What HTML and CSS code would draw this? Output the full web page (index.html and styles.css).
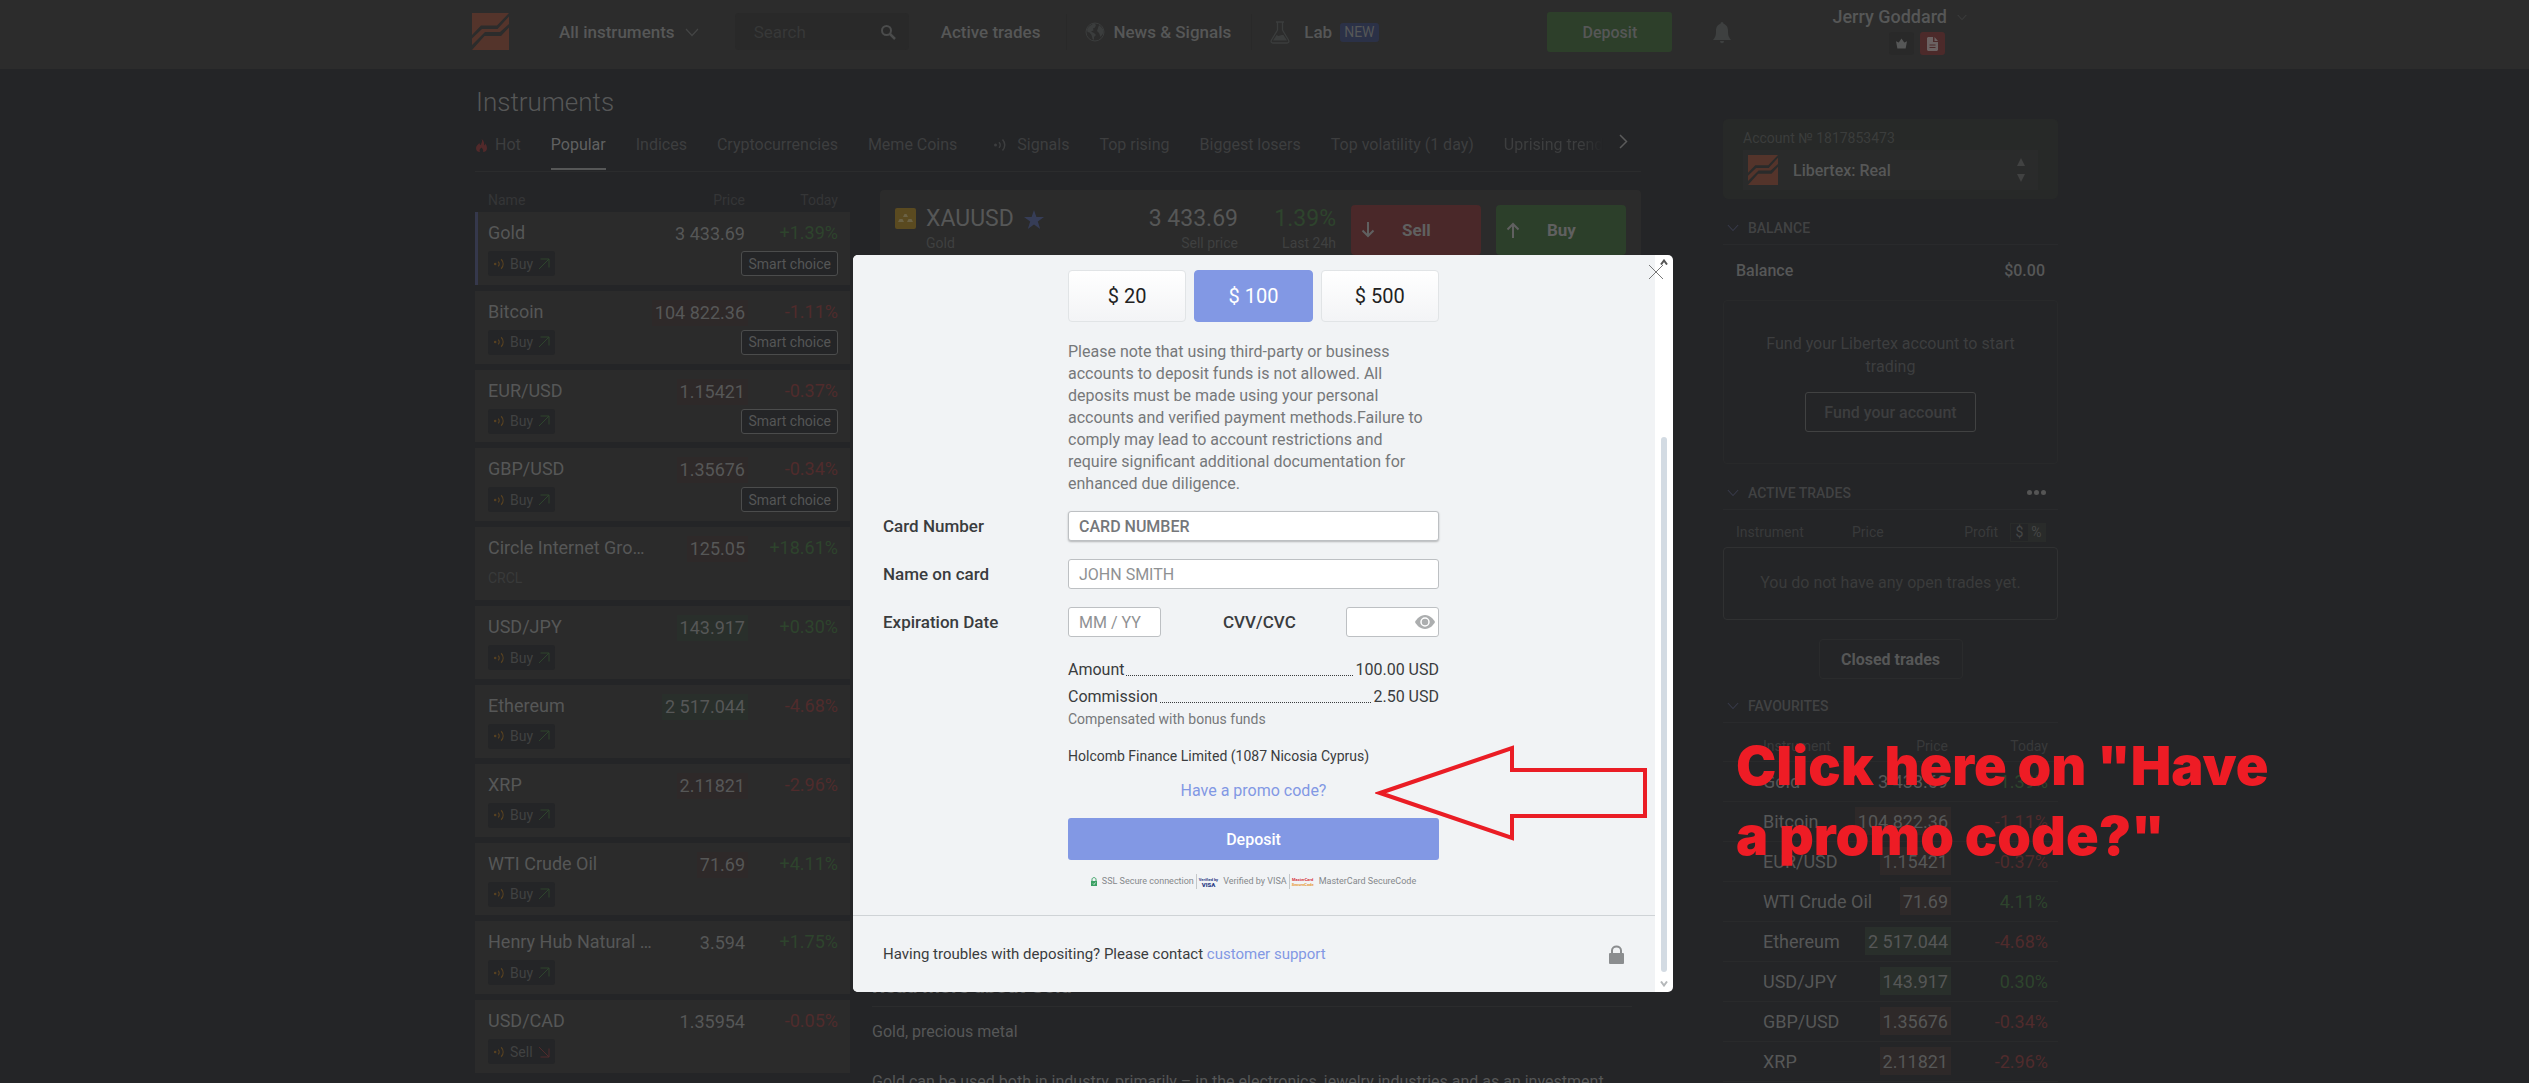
FILE: index.html
```html
<!DOCTYPE html>
<html lang="en">
<head>
    <meta charset="UTF-8">
    <meta name="viewport" content="width=device-width, initial-scale=1.0">
    <title>Libertex</title>
    <link rel="stylesheet" href="styles.css">
</head>
<body>
    <!-- Shared icons -->
    <svg class="sprite" aria-hidden="true">
        <symbol id="logo" viewBox="0 0 37 37">
            <path d="M0 0h37L25 12.500H9L0 22z"/>
            <path d="M37 3.500V11L28 19H13L0 32v-6.500L10 16h15.500z"/>
            <path d="M37 14.500V37H0L12.500 23H29z"/>
        </symbol>
        <symbol id="chevron" viewBox="0 0 14 9">
            <path d="M1 1l6 6.500L13 1" fill="none" stroke="currentColor" stroke-width="1.200"/>
        </symbol>
        <symbol id="signal" viewBox="0 0 14 14">
            <circle cx="2.500" cy="7" r="1.500" fill="currentColor"/>
            <path d="M6 4.200c1.600 1.600 1.600 4 0 5.600M9.500 1.500c3 3.200 3 7.800 0 11" fill="none" stroke="currentColor" stroke-width="1.500"/>
        </symbol>
        <symbol id="arrow-up-right" viewBox="0 0 12 12">
            <path d="M1 11L11 1M2.500 1H11v8.500" fill="none" stroke="currentColor"/>
        </symbol>
        <symbol id="arrow-down-right" viewBox="0 0 12 12">
            <path d="M1 1l10 10M2.500 11H11V2.500" fill="none" stroke="currentColor"/>
        </symbol>
    </svg>

    <header class="topbar">
        <div class="topbar-inner">
            <a href="#" class="logo" aria-label="Libertex"><svg><use href="#logo"/></svg></a>
            <button class="nav-menu">All instruments <svg><use href="#chevron"/></svg></button>
            <div class="search">
                <input type="text" placeholder="Search" aria-label="Search">
                <svg viewBox="0 0 16 16"><circle cx="6.500" cy="6.500" r="4.500" fill="none" stroke="currentColor" stroke-width="2"/><path d="M10 10l5 5" stroke="currentColor" stroke-width="2.500"/></svg>
            </div>
            <nav class="nav">
                <a href="#" class="nav-link">Active trades</a>
                <a href="#" class="nav-link nav-news">
                    <svg viewBox="0 0 20 20"><circle cx="10" cy="10" r="9" fill="none" stroke="currentColor"/><path d="M4 4.500l5-3.500 2 2-1 2.500-2 1 .500 2-2.500 1 3 1.500 2 2-2 2v3l-1.500-1-1-4-2-2.500-2-.500L2 7zM14 3l4 4 .500 4-3 4-1.500-4-2-2 1-3z" fill="currentColor"/></svg>
                    News &amp; Signals
                </a>
                <a href="#" class="nav-link nav-lab">
                    <svg viewBox="0 0 20 23"><path d="M6 1h8M7.500 1v8L1.500 19c-1 2 0 3 1.500 3h14c1.500 0 2.500-1 1.500-3l-6-10V1" fill="none" stroke="currentColor" stroke-width="1.300"/><path d="M6.500 14l2 1 3-1h2l3.500 5.500H3z" fill="currentColor"/></svg>
                    Lab <span class="badge-new">NEW</span>
                </a>
            </nav>
            <div class="account-menu">
                <button class="btn-deposit-top">Deposit</button>
                <button class="bell" aria-label="Notifications">
                    <svg viewBox="0 0 18 22"><path d="M9 0c1 0 1.500.800 1.500 1.800C14 2.800 15 6 15 9c0 5 1 6.500 3 9H0c2-2.500 3-4 3-9 0-3 1-6.200 4.500-7.200C7.500.800 8 0 9 0zM7 19h4c0 3-4 3-4 0z" fill="currentColor"/></svg>
                </button>
                <div class="user">
                    <button class="user-name">Jerry Goddard <svg><use href="#chevron"/></svg></button>
                    <div class="user-badges">
                        <span class="user-badge crown"><svg viewBox="0 0 12 11"><path d="M0 3l3 1.500L6 0l3 4.500L12 3l-1.500 8h-9z" fill="currentColor"/></svg></span>
                        <span class="user-badge doc"><svg viewBox="0 0 11 14"><path d="M1 0h5v5h5v8l-1 1H1l-1-1V1zM7.500 0L11 4H7.500z" fill="currentColor"/><path d="M2.500 8h6M2.500 10.500h6" stroke="#4c2a2a"/></svg></span>
                    </div>
                </div>
            </div>
        </div>
    </header>

    <main class="page">
        <section class="workspace">
            <h1>Instruments</h1>
            <div class="tabs">
                <button class="tab tab-hot"><svg viewBox="0 0 11 13"><path d="M5.500 0C7 2.500 5 4 5 6 4 6 3.500 5 3.500 4 1 6 0 7.500 0 9.500 0 12 2 13 4 13c-1-2 0-3 1.500-4.500C7 10 7.500 11.500 7 13c2.500 0 4-1.500 4-4 0-2-1-3-1.500-4.500-.500 1-.500 1.500-1.500 2C8.500 4 8 1.500 5.500 0z" fill="currentColor"/></svg>Hot</button>
                <button class="tab active">Popular</button>
                <button class="tab">Indices</button>
                <button class="tab">Cryptocurrencies</button>
                <button class="tab">Meme Coins</button>
                <button class="tab tab-signals"><svg><use href="#signal"/></svg>Signals</button>
                <button class="tab">Top rising</button>
                <button class="tab">Biggest losers</button>
                <button class="tab">Top volatility (1 day)</button>
                <button class="tab tab-last">Uprising trend</button>
                <button class="tabs-next" aria-label="Next"><svg viewBox="0 0 9 15"><path d="M1 1l6.500 6.500L1 14" fill="none" stroke="currentColor" stroke-width="1.500"/></svg></button>
            </div>

            <div class="columns">
                <table class="instruments">
                    <thead>
                        <tr><th>Name</th><th>Price</th><th>Today</th></tr>
                    </thead>
                    <tbody>
                        <tr class="selected">
                            <td>Gold<span class="tag"><svg class="sig"><use href="#signal"/></svg>Buy<svg class="up"><use href="#arrow-up-right"/></svg></span></td>
                            <td><span class="price">3 433.69</span></td>
                            <td class="up">+1.39%<span class="smart">Smart choice</span></td>
                        </tr>
                        <tr>
                            <td>Bitcoin<span class="tag"><svg class="sig"><use href="#signal"/></svg>Buy<svg class="up"><use href="#arrow-up-right"/></svg></span></td>
                            <td><span class="price fall">104 822.36</span></td>
                            <td class="down">-1.11%<span class="smart">Smart choice</span></td>
                        </tr>
                        <tr>
                            <td>EUR/USD<span class="tag"><svg class="sig"><use href="#signal"/></svg>Buy<svg class="up"><use href="#arrow-up-right"/></svg></span></td>
                            <td><span class="price fall">1.15421</span></td>
                            <td class="down">-0.37%<span class="smart">Smart choice</span></td>
                        </tr>
                        <tr>
                            <td>GBP/USD<span class="tag"><svg class="sig"><use href="#signal"/></svg>Buy<svg class="up"><use href="#arrow-up-right"/></svg></span></td>
                            <td><span class="price fall">1.35676</span></td>
                            <td class="down">-0.34%<span class="smart">Smart choice</span></td>
                        </tr>
                        <tr>
                            <td>Circle Internet Gro…<span class="ticker">CRCL</span></td>
                            <td><span class="price fall">125.05</span></td>
                            <td class="up">+18.61%</td>
                        </tr>
                        <tr>
                            <td>USD/JPY<span class="tag"><svg class="sig"><use href="#signal"/></svg>Buy<svg class="up"><use href="#arrow-up-right"/></svg></span></td>
                            <td><span class="price rise">143.917</span></td>
                            <td class="up">+0.30%</td>
                        </tr>
                        <tr>
                            <td>Ethereum<span class="tag"><svg class="sig"><use href="#signal"/></svg>Buy<svg class="up"><use href="#arrow-up-right"/></svg></span></td>
                            <td><span class="price rise">2 517.044</span></td>
                            <td class="down">-4.68%</td>
                        </tr>
                        <tr>
                            <td>XRP<span class="tag"><svg class="sig"><use href="#signal"/></svg>Buy<svg class="up"><use href="#arrow-up-right"/></svg></span></td>
                            <td><span class="price fall">2.11821</span></td>
                            <td class="down">-2.96%</td>
                        </tr>
                        <tr>
                            <td>WTI Crude Oil<span class="tag"><svg class="sig"><use href="#signal"/></svg>Buy<svg class="up"><use href="#arrow-up-right"/></svg></span></td>
                            <td><span class="price fall">71.69</span></td>
                            <td class="up">+4.11%</td>
                        </tr>
                        <tr>
                            <td>Henry Hub Natural …<span class="tag"><svg class="sig"><use href="#signal"/></svg>Buy<svg class="up"><use href="#arrow-up-right"/></svg></span></td>
                            <td><span class="price">3.594</span></td>
                            <td class="up">+1.75%</td>
                        </tr>
                        <tr>
                            <td>USD/CAD<span class="tag"><svg class="sig"><use href="#signal"/></svg>Sell<svg class="down"><use href="#arrow-down-right"/></svg></span></td>
                            <td><span class="price">1.35954</span></td>
                            <td class="down">-0.05%</td>
                        </tr>
                    </tbody>
                </table>

                <div class="details">
                    <div class="chart-panel">
                        <svg class="gold-icon" viewBox="0 0 21 21"><rect width="21" height="21" rx="2" fill="#5a4a20"/><path d="M8 9l1.500-3h2L13 9zM3 14l1.500-3h3L9 14zM12 14l1.500-3h3l1.500 3z" fill="#6b6245"/></svg>
                        <div class="symbol">
                            <strong>XAUUSD</strong>
                            <small>Gold</small>
                        </div>
                        <svg class="star" viewBox="0 0 20 19"><path d="M10 0l2.400 7H20l-6.200 4.400L16.200 19 10 14.500 3.800 19l2.400-7.600L0 7h7.600z" fill="currentColor"/></svg>
                        <div class="quote">
                            <strong>3 433.69</strong>
                            <small>Sell price</small>
                        </div>
                        <div class="quote change">
                            <strong class="up">1.39%</strong>
                            <small>Last 24h</small>
                        </div>
                        <button class="trade sell"><svg viewBox="0 0 14 16"><path d="M7 0v14M1.500 8.500L7 14l5.500-5.500" fill="none" stroke="currentColor" stroke-width="2"/></svg>Sell</button>
                        <button class="trade buy"><svg viewBox="0 0 14 16"><path d="M7 16V2M1.500 7.500L7 2l5.500 5.500" fill="none" stroke="currentColor" stroke-width="2"/></svg>Buy</button>
                    </div>
                    <article class="about">
                        <h2>Read more about Gold</h2>
                        <p>Gold, precious metal</p>
                        <p>Gold can be used both in industry, primarily – in the electronics, jewelry industries and as an investment</p>
                    </article>
                </div>
            </div>
        </section>

        <aside class="sidebar">
            <div class="account-card">
                <span class="account-no">Account № 1817853473</span>
                <button class="account-select">
                    <svg class="account-logo"><use href="#logo"/></svg>
                    Libertex: Real
                    <svg class="account-arrows" viewBox="0 0 8 24"><path d="M0 8l4-8 4 8zM0 16h8l-4 8z" fill="currentColor"/></svg>
                </button>
            </div>

            <h3 class="side-title"><svg><use href="#chevron"/></svg>BALANCE</h3>
            <div class="balance"><span>Balance</span><span>$0.00</span></div>
            <div class="fund-box">
                <p>Fund your Libertex account to start trading</p>
                <button>Fund your account</button>
            </div>

            <h3 class="side-title"><svg><use href="#chevron"/></svg>ACTIVE TRADES<span class="dots"><i></i><i></i><i></i></span></h3>
            <div class="trades-head">
                <span>Instrument</span>
                <span>Price</span>
                <span class="profit">Profit</span>
                <span class="unit"><b>$</b><b class="off">%</b></span>
            </div>
            <div class="no-trades">You do not have any open trades yet.</div>
            <button class="closed-trades">Closed trades</button>

            <h3 class="side-title"><svg><use href="#chevron"/></svg>FAVOURITES</h3>
            <table class="favourites">
                <thead><tr><th>Instrument</th><th>Price</th><th>Today</th></tr></thead>
                <tbody>
                    <tr><td>Gold</td><td><span class="price">3 433.69</span></td><td class="up">1.39%</td></tr>
                    <tr><td>Bitcoin</td><td><span class="price fall">104 822.36</span></td><td class="down">-1.11%</td></tr>
                    <tr><td>EUR/USD</td><td><span class="price fall">1.15421</span></td><td class="down">-0.37%</td></tr>
                    <tr><td>WTI Crude Oil</td><td><span class="price fall">71.69</span></td><td class="up">4.11%</td></tr>
                    <tr><td>Ethereum</td><td><span class="price rise">2 517.044</span></td><td class="down">-4.68%</td></tr>
                    <tr><td>USD/JPY</td><td><span class="price rise">143.917</span></td><td class="up">0.30%</td></tr>
                    <tr><td>GBP/USD</td><td><span class="price fall">1.35676</span></td><td class="down">-0.34%</td></tr>
                    <tr><td>XRP</td><td><span class="price fall">2.11821</span></td><td class="down">-2.96%</td></tr>
                </tbody>
            </table>
        </aside>

        <p class="callout">Click here on "Have<br>a promo code?"</p>
    </main>

    <div class="overlay">
        <div class="modal" role="dialog" aria-label="Deposit">
            <form class="modal-content">
                <div class="form-area">
                    <div class="amounts">
                        <button type="button">$ 20</button>
                        <button type="button" class="active">$ 100</button>
                        <button type="button">$ 500</button>
                    </div>
                    <p class="note">Please note that using third-party or business accounts to deposit funds is not allowed. All deposits must be made using your personal accounts and verified payment methods.Failure to comply may lead to account restrictions and require significant additional documentation for enhanced due diligence.</p>

                    <label for="card-number">Card Number</label>
                    <div class="field"><input type="text" id="card-number" class="focused" placeholder="CARD NUMBER"></div>

                    <label for="card-name">Name on card</label>
                    <div class="field"><input type="text" id="card-name" placeholder="JOHN SMITH"></div>

                    <label for="card-expiry">Expiration Date</label>
                    <div class="field field-split">
                        <input type="text" id="card-expiry" placeholder="MM / YY">
                        <label for="card-cvv">CVV/CVC</label>
                        <div class="cvv">
                            <input type="text" id="card-cvv">
                            <svg viewBox="0 0 20 14"><path d="M10 0c5 0 8.500 4 10 7-1.500 3-5 7-10 7S1.500 10 0 7c1.500-3 5-7 10-7z" fill="#acaeaf"/><circle cx="10" cy="7" r="4" fill="none" stroke="#fff" stroke-width="1.500"/></svg>
                        </div>
                    </div>

                    <div class="summary">
                        <div class="sum-row"><span>Amount</span><i></i><span>100.00 USD</span></div>
                        <div class="sum-row"><span>Commission</span><i></i><span>2.50 USD</span></div>
                        <small>Compensated with bonus funds</small>
                        <p class="company">Holcomb Finance Limited (1087 Nicosia Cyprus)</p>
                        <a href="#" class="promo">Have a promo code?</a>
                        <button type="button" class="btn-deposit">Deposit</button>
                        <div class="secure">
                            <span><svg class="ssl" viewBox="0 0 6 9"><path d="M0 4h6v5H0z" fill="#3aa063"/><path d="M1 4V2.500C1 0 5 0 5 2.500V4" fill="none" stroke="#3aa063"/><path d="M2 6.500l1 1 1.500-2" fill="none" stroke="#fff" stroke-width=".700"/></svg>SSL Secure connection</span>
                            <span><em class="visa">Verified by<b>VISA</b></em>Verified by VISA</span>
                            <span><em class="mc">MasterCard<b>SecureCode</b></em>MasterCard SecureCode</span>
                        </div>
                    </div>
                </div>
                <footer class="modal-footer">
                    <span>Having troubles with depositing? Please contact <a href="#">customer support</a></span>
                    <svg viewBox="0 0 15 19"><rect y="8" width="15" height="11" rx="1" fill="#8b8d8f"/><path d="M3 9V5.500C3 0 12 0 12 5.500V9" fill="none" stroke="#8b8d8f" stroke-width="2"/></svg>
                </footer>
            </form>
            <div class="scrollbar">
                <svg viewBox="0 0 8 6"><path d="M1 5.500L4 1.500l3 4" fill="none" stroke="#555" stroke-width="2"/></svg>
                <span></span>
                <svg viewBox="0 0 8 6"><path d="M1 .500l3 4 3-4" fill="none" stroke="#b5b8ba" stroke-width="2"/></svg>
            </div>
            <button class="close" aria-label="Close"><svg viewBox="0 0 14 14"><path d="M0 0l14 14M14 0L0 14" stroke="#777" stroke-width="1"/></svg></button>
            <svg class="pointer" viewBox="0 0 272 98"><path d="M5 49L137 4v22h133v46H137v22z" fill="none" stroke="#ea1d25" stroke-width="4"/></svg>
        </div>
    </div>
</body>
</html>
```
FILE: styles.css
```css
:root {
    --bg: #242527;
    --panel: #2b2b2b;
    --text: #565757;
    --muted: #3d3e3f;
    --line: #2b2c2d;
    --up: #2e442d;
    --down: #502b2c;
    --accent: #8298e4;
    --red: #ee1c25;
}

* {
    box-sizing: border-box;
}

body {
    margin: 0;
    height: 100vh;
    overflow: hidden;
    display: flex;
    flex-direction: column;
    background: var(--bg);
    color: var(--text);
    font-family: Roboto, "Liberation Sans", sans-serif;
    font-size: 16px;
}

button {
    font: inherit;
    color: inherit;
    background: none;
    border: none;
    padding: 0;
}

input {
    font: inherit;
}

a {
    color: inherit;
    text-decoration: none;
}

h1, h2, h3, p {
    margin: 0;
    font-weight: normal;
}

.sprite {
    position: absolute;
    width: 0;
    height: 0;
}

.up {
    color: var(--up);
}

.down {
    color: var(--down);
}

/* Top bar */
.topbar {
    height: 69px;
    flex: none;
    background: #2c2c2c;
}

.topbar-inner {
    max-width: 1587px;
    margin: 0 auto;
    padding: 0 91px 0 1px;
    display: flex;
    font-size: 17px;
    font-weight: 500;
}

.logo {
    margin: 13px 50px 0 0;
}

.logo svg {
    display: block;
    width: 37px;
    height: 37px;
    fill: #54342b;
}

.nav-menu {
    display: flex;
    align-items: center;
    gap: 10px;
    height: 64px;
    margin-right: 36px;
    white-space: nowrap;
}

.nav-menu svg {
    width: 14px;
    height: 9px;
    color: #444545;
}

.search {
    display: flex;
    align-items: center;
    width: 174px;
    height: 37px;
    margin: 13px 32px 0 0;
    padding: 0 13px 0 19px;
    background: #292929;
    border-radius: 4px;
}

.search input {
    flex: 1;
    min-width: 0;
    padding: 0;
    border: none;
    background: none;
    color: var(--text);
    font-weight: 400;
}

.search input::placeholder {
    color: #373838;
}

.search svg {
    width: 16px;
    height: 16px;
    color: #4b4c4c;
}

.nav {
    display: flex;
    align-items: center;
    height: 64px;
    white-space: nowrap;
}

.nav-link {
    display: flex;
    align-items: center;
    height: 36px;
    padding-right: 26px;
}

.nav-news,
.nav-lab {
    padding-left: 18px;
    padding-right: 20px;
    border-left: 1px solid #292929;
    gap: 8px;
}

.nav-news svg {
    width: 20px;
    height: 20px;
    color: #3b3d3d;
}

.nav-lab svg {
    width: 20px;
    height: 23px;
    margin-right: 6px;
    color: #3b3d3d;
}

.badge-new {
    padding: 0 4px;
    line-height: 19px;
    font-size: 14px;
    font-weight: 400;
    background: #2b3147;
    border-radius: 3px;
}

.account-menu {
    display: flex;
    flex: 1;
    justify-content: flex-end;
}

.btn-deposit-top {
    width: 125px;
    height: 40px;
    margin-top: 12px;
    background: #2d3f2a;
    border-radius: 3px;
    font-size: 16px;
}

.bell {
    margin: 22px 0 0 41px;
    height: 22px;
    color: #3e4040;
}

.bell svg {
    display: block;
    width: 18px;
    height: 22px;
}

.user {
    margin: 5px 0 0 101px;
}

.user-name {
    display: flex;
    align-items: center;
    gap: 10px;
    line-height: 24px;
    font-size: 18px;
    font-weight: 500;
    white-space: nowrap;
}

.user-name svg {
    width: 10px;
    height: 7px;
    color: #424343;
}

.user-badges {
    display: flex;
    justify-content: flex-end;
    gap: 6px;
    padding: 3px 22px 0 0;
}

.user-badge {
    display: flex;
    align-items: center;
    justify-content: center;
    width: 25px;
    height: 23px;
    border-radius: 3px;
    background: #292929;
}

.user-badge svg {
    width: 11px;
    height: 14px;
}

.user-badge.crown svg {
    height: 11px;
}

.user-badge.doc {
    background: #4c2a2a;
    color: #6b6262;
}

/* Page layout */
.page {
    position: relative;
    flex: 1;
    min-height: 0;
    width: 100%;
    max-width: 1587px;
    margin: 0 auto;
    padding-left: 4px;
    display: grid;
    grid-template-columns: 1fr 335px;
    grid-template-rows: minmax(0, 1fr);
    gap: 82px;
}

.workspace {
    display: flex;
    flex-direction: column;
    min-height: 0;
    min-width: 0;
}

.workspace h1 {
    padding: 16px 0 0 1px;
    font-size: 26px;
    line-height: 34px;
    font-weight: 300;
}

.tabs {
    display: flex;
    height: 53px;
    border-bottom: 1px solid var(--line);
    white-space: nowrap;
}

.tab {
    display: flex;
    align-items: center;
    height: 51px;
    margin-right: 30px;
    color: var(--muted);
}

.tab.active {
    color: #606161;
    border-bottom: 2px solid #565757;
    border-top: 2px solid transparent;
}

.tab-hot svg {
    width: 11px;
    height: 13px;
    margin: 2px 8px 0 1px;
    color: #51292a;
}

.tab-signals svg {
    width: 14px;
    height: 14px;
    margin: 0 10px 0 6px;
}

.tab-last {
    flex: 1;
    min-width: 0;
    margin-right: 10px;
    overflow: hidden;
    -webkit-mask-image: linear-gradient(to left, transparent 6px, #000 28px);
    mask-image: linear-gradient(to left, transparent 6px, #000 28px);
}

.tabs-next {
    width: 22px;
    height: 49px;
    text-align: left;
    color: #5a5b5b;
}

.tabs-next svg {
    width: 9px;
    height: 15px;
}

.columns {
    flex: 1;
    min-height: 0;
    display: grid;
    grid-template-columns: 375px 1fr;
    gap: 22px;
}

/* Instrument list */
.instruments {
    display: flex;
    flex-direction: column;
    padding: 16px 0 10px;
}

.instruments tbody {
    flex: 1;
    display: flex;
    flex-direction: column;
    gap: 6px;
}

.instruments tr {
    display: grid;
    grid-template-columns: 1fr auto 93px;
    padding: 0 12px 0 13px;
}

.instruments tbody tr {
    flex: 1;
    padding-top: 9px;
    background: var(--panel);
    font-size: 18px;
    line-height: 24px;
}

.instruments tbody tr.selected {
    padding-left: 10px;
    border-left: 3px solid #35384c;
}

.instruments th {
    padding: 0;
    line-height: 24px;
    font-size: 14px;
    font-weight: 400;
    color: #353637;
    text-align: right;
}

.instruments th:first-child {
    text-align: left;
}

.instruments td {
    display: flex;
    flex-direction: column;
    align-items: flex-end;
    padding: 0;
    white-space: nowrap;
}

.instruments td:first-child {
    align-items: flex-start;
}

.price {
    margin-right: -3px;
    padding: 1px 3px;
}

.price.fall {
    background: #2e2929;
}

.price.rise {
    background: #292f2b;
}

.tag,
.smart {
    display: flex;
    align-items: center;
    height: 25px;
    margin-top: 6px;
    border-radius: 3px;
    background: var(--bg);
    font-size: 14px;
}

.tag {
    gap: 5px;
    padding: 0 5px;
    color: #414242;
}

.tag svg {
    width: 12px;
    height: 12px;
}

.tag .sig {
    color: #574121;
}

.smart {
    padding: 0 6px;
    border: 1px solid #4b4c4c;
    color: #555656;
}

.ticker {
    margin-top: 6px;
    font-size: 14px;
    color: #393a3a;
}

/* Chart and description */
.details {
    display: flex;
    flex-direction: column;
    min-height: 0;
    padding-top: 18px;
}

.chart-panel {
    flex: 1;
    display: flex;
    align-items: flex-start;
    margin-left: 8px;
    padding: 15px 15px 0;
    background: var(--panel);
    border-radius: 4px;
}

.chart-panel strong {
    display: block;
    font-size: 23px;
    line-height: 28px;
    font-weight: 400;
}

.chart-panel small {
    display: block;
    font-size: 14px;
    line-height: 20px;
    color: #3f4040;
}

.gold-icon {
    width: 21px;
    height: 21px;
    margin: 3px 10px 0 0;
}

.star {
    width: 20px;
    height: 19px;
    margin: 5px 0 0 10px;
    color: #363d57;
}

.quote {
    flex: 1;
    text-align: right;
}

.quote.change {
    flex: none;
    width: 98px;
}

.trade {
    display: flex;
    align-items: center;
    width: 130px;
    height: 50px;
    margin-left: 15px;
    padding-left: 10px;
    gap: 27px;
    border-radius: 4px;
    font-size: 17px;
    font-weight: 700;
    color: #606060;
}

.trade svg {
    width: 14px;
    height: 16px;
}

.trade.sell {
    background: #4a2829;
}

.trade.buy {
    background: #2c3f2a;
}

.about {
    height: 113px;
    overflow: hidden;
    padding-right: 9px;
    line-height: 22px;
}

.about h2 {
    padding: 4px 0 8px;
    border-bottom: 1px solid var(--line);
    font-size: 20px;
    line-height: 24px;
    font-weight: 700;
}

.about p {
    padding-top: 14px;
    white-space: nowrap;
}

.about p + p {
    padding-top: 28px;
}

/* Sidebar */
.account-card {
    margin-top: 50px;
    height: 80px;
    padding: 8px 20px 0;
    border-radius: 5px;
    background: #272928;
}

.account-no {
    display: block;
    font-size: 14px;
    line-height: 23px;
    color: #3b3d3c;
}

.account-select {
    display: flex;
    align-items: center;
    width: 100%;
    height: 40px;
    padding: 0 13px 0 5px;
    background: #2a2b2b;
    font-weight: 500;
}

.account-logo {
    width: 30px;
    height: 30px;
    margin-right: 15px;
    fill: #54342b;
}

.account-arrows {
    width: 8px;
    height: 24px;
    margin-left: auto;
    color: #414242;
}

.side-title {
    display: flex;
    align-items: center;
    height: 34px;
    margin-top: 12px;
    padding: 0 12px 0 4px;
    border-bottom: 1px solid #292a2c;
    font-size: 14px;
    font-weight: 500;
    color: #414243;
}

.side-title svg {
    width: 12px;
    height: 8px;
    margin-right: 9px;
    color: #383a4a;
}

.dots {
    display: flex;
    gap: 2px;
    margin-left: auto;
}

.dots i {
    width: 5px;
    height: 5px;
    border-radius: 50%;
    background: #555;
}

.balance {
    display: flex;
    justify-content: space-between;
    padding: 0 13px;
    line-height: 52px;
    font-weight: 500;
}

.fund-box {
    height: 164px;
    margin-top: 3px;
    padding: 31px 32px 0;
    border: 1px solid #28292a;
    border-radius: 4px;
    text-align: center;
    line-height: 23px;
    color: var(--muted);
}

.fund-box button {
    height: 40px;
    margin-top: 14px;
    padding: 0 18px;
    border: 1px solid #414242;
    border-radius: 3px;
    font-weight: 500;
}

.trades-head {
    display: flex;
    align-items: center;
    height: 36px;
    padding: 8px 12px 0 13px;
    font-size: 14px;
    color: #393a3b;
}

.trades-head span:first-child {
    width: 116px;
}

.trades-head .profit {
    margin: 0 12px 0 auto;
}

.unit {
    display: flex;
    background: #292b2a;
    border: 1px solid #292b2a;
}

.unit b {
    width: 17px;
    line-height: 17px;
    text-align: center;
    background: var(--bg);
    color: #454646;
    font-weight: 400;
}

.unit .off {
    background: none;
}

.no-trades {
    height: 73px;
    margin-top: 1px;
    border: 1px solid #303132;
    border-radius: 4px;
    text-align: center;
    line-height: 70px;
    color: #3a3b3b;
}

.closed-trades {
    display: block;
    width: 144px;
    height: 40px;
    margin: 19px auto 0;
    border: 1px solid #2a2b2c;
    border-radius: 4px;
    font-weight: 700;
}

.closed-trades + .side-title {
    margin-top: 10px;
}

.favourites {
    width: 100%;
    table-layout: fixed;
    border-collapse: collapse;
    font-size: 18px;
    white-space: nowrap;
}

.favourites th {
    padding: 8px 0 0;
    height: 38px;
    border-bottom: 1px solid #292a2b;
    font-size: 14px;
    font-weight: 400;
    color: #393a3b;
    text-align: right;
}

.favourites td {
    height: 40px;
    padding: 0;
    border-bottom: 1px solid #292a2b;
    text-align: right;
}

.favourites .price {
    margin-right: 0;
    padding: 4px 3px 3px;
}

.favourites th:nth-child(2) {
    padding-right: 3px;
}

.favourites th:first-child,
.favourites td:first-child {
    width: 123px;
    padding-left: 40px;
    text-align: left;
}

.favourites th:last-child,
.favourites td:last-child {
    width: 107px;
    padding-right: 10px;
}

/* Callout text over the sidebar */
.callout {
    position: absolute;
    left: 1265px;
    top: 662px;
    color: var(--red);
    font-family: Inter, "Liberation Sans", sans-serif;
    font-size: 54px;
    line-height: 70px;
    font-weight: 900;
    white-space: nowrap;
}

/* Deposit window */
.overlay {
    position: fixed;
    inset: 0;
    padding: 255px 3px 0 0;
}

.modal {
    position: relative;
    width: 820px;
    margin: 0 auto;
    display: flex;
    overflow: hidden;
    border-radius: 5px;
    background: #fff;
    color: #3a3c3e;
}

.modal-content {
    flex: 1;
    background: #f1f3f5;
}

.form-area {
    display: grid;
    grid-template-columns: 185px 371px;
    padding: 15px 0 26px 30px;
}

.amounts,
.note,
.summary {
    grid-column: 2;
}

.amounts {
    display: grid;
    grid-template-columns: repeat(3, 1fr);
    gap: 8px;
}

.amounts button {
    height: 52px;
    border: 1px solid #e1e4e6;
    border-radius: 4px;
    background: linear-gradient(#fff, #f3f4f6);
    font-size: 20px;
    color: #222;
}

.amounts button.active {
    border-color: var(--accent);
    background: var(--accent);
    color: #fff;
}

.note {
    margin: 19px 0 16px;
    padding-right: 6px;
    font-size: 16px;
    line-height: 22px;
    color: #76787a;
}

.form-area label {
    font-size: 17px;
    line-height: 31px;
    font-weight: 500;
}

.field {
    height: 30px;
    margin-bottom: 18px;
}

.field input {
    display: block;
    width: 100%;
    height: 30px;
    padding: 0 10px;
    border: 1px solid #bdc0c3;
    border-radius: 3px;
    background: #fff;
    color: #3a3c3e;
}

.field input::placeholder {
    color: #8f9193;
}

.field input.focused {
    font-weight: 500;
    box-shadow: 0 1px 2px rgba(0, 0, 0, 0.25);
}

.field input.focused::placeholder {
    color: #75777a;
}

.field-split {
    display: flex;
}

.field-split > label {
    margin: 0 auto 0 62px;
}

.field-split > input,
.cvv {
    width: 93px;
}

.cvv {
    position: relative;
}

.cvv svg {
    position: absolute;
    right: 4px;
    top: 8px;
    width: 20px;
    height: 14px;
}

.summary {
    padding-top: 1px;
}

.sum-row {
    display: flex;
    font-size: 16px;
    line-height: 27px;
}

.sum-row i {
    flex: 1;
    height: 20px;
    margin: 0 2px;
    border-bottom: 1px dotted #3a3c3e;
}

.summary small {
    display: block;
    font-size: 14px;
    line-height: 18px;
    color: #76787a;
}

.company {
    margin-top: 16px;
    font-size: 14px;
    line-height: 24px;
}

.promo {
    display: block;
    margin-top: 10px;
    line-height: 26px;
    text-align: center;
    color: var(--accent);
}

.btn-deposit {
    display: block;
    width: 100%;
    height: 42px;
    margin-top: 14px;
    border-radius: 3px;
    background: var(--accent);
    color: #fff;
    font-weight: 500;
}

.secure {
    display: flex;
    justify-content: center;
    margin-top: 14px;
    font-size: 9px;
    line-height: 15px;
    color: #85888b;
}

.secure span {
    display: flex;
    align-items: center;
    height: 15px;
    padding: 0 2px;
}

.secure span + span {
    border-left: 1px solid #c5c8ca;
}

.ssl {
    width: 6px;
    height: 9px;
    margin-right: 5px;
}

.secure em {
    margin-right: 5px;
    font-size: 4px;
    line-height: 5px;
    font-style: normal;
    font-weight: 700;
    text-align: center;
    color: #2b3b86;
}

.secure b {
    display: block;
    font-size: 6px;
    font-weight: 900;
}

.secure .mc {
    color: #d6343f;
}

.secure .mc b {
    font-size: 4px;
    color: #e8a04a;
}

.modal-footer {
    display: flex;
    align-items: center;
    justify-content: space-between;
    height: 77px;
    padding: 0 31px 0 30px;
    border-top: 1px solid #cfd3d6;
    font-size: 15px;
}

.modal-footer a {
    color: var(--accent);
}

.modal-footer svg {
    width: 15px;
    height: 19px;
}

.scrollbar {
    display: flex;
    flex-direction: column;
    align-items: center;
    width: 18px;
    padding: 4px 0 5px;
}

.scrollbar svg {
    width: 8px;
    height: 6px;
}

.scrollbar span {
    flex: 1;
    width: 6px;
    margin: 172px 0 9px;
    border-radius: 3px;
    background: #d3dbe3;
}

.close {
    position: absolute;
    top: 10px;
    right: 10px;
}

.close svg {
    display: block;
    width: 14px;
    height: 14px;
}

.pointer {
    position: absolute;
    right: 26px;
    top: 489px;
    width: 272px;
    height: 98px;
}
```
